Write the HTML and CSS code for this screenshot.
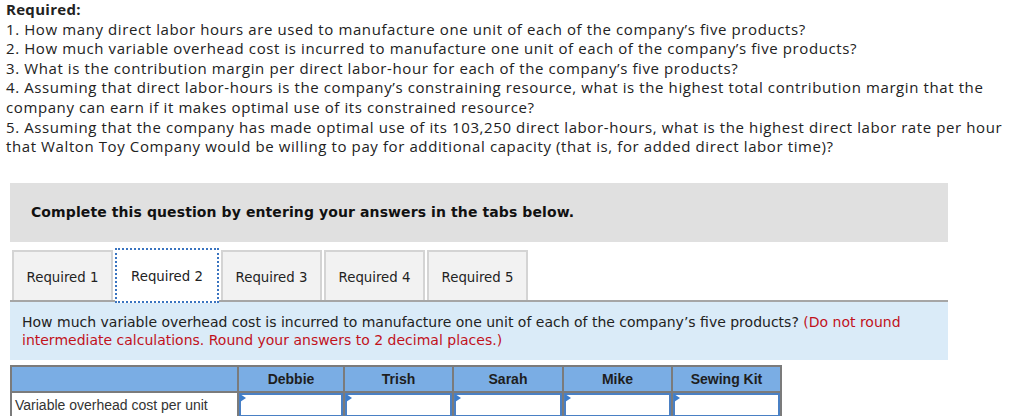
FILE: index.html
```html
<!DOCTYPE html>
<html>
<head>
<meta charset="utf-8">
<link rel="stylesheet" href="styles.css">
</head>
<body>
<div class="req">
  <div class="req-title">Required:</div>
  <div>1. How many direct labor hours are used to manufacture one unit of each of the company’s five products?</div>
  <div>2. How much variable overhead cost is incurred to manufacture one unit of each of the company’s five products?</div>
  <div>3. What is the contribution margin per direct labor-hour for each of the company’s five products?</div>
  <div>4. Assuming that direct labor-hours is the company’s constraining resource, what is the highest total contribution margin that the company can earn if it makes optimal use of its constrained resource?</div>
  <div>5. Assuming that the company has made optimal use of its 103,250 direct labor-hours, what is the highest direct labor rate per hour that Walton Toy Company would be willing to pay for additional capacity (that is, for added direct labor time)?</div>
</div>

<div class="wrap">
  <div class="complete">Complete this question by entering your answers in the tabs below.</div>

  <div class="tabs">
    <div class="tab">Required 1</div>
    <div class="tab active">Required 2</div>
    <div class="tab">Required 3</div>
    <div class="tab">Required 4</div>
    <div class="tab">Required 5</div>
  </div>

  <div class="panel">
    How much variable overhead cost is incurred to manufacture one unit of each of the company’s five products? <span class="red">(Do not round intermediate calculations. Round your answers to 2 decimal places.)</span>
  </div>

  <table class="grid">
    <colgroup>
      <col class="c0"><col class="c1"><col class="c2"><col class="c3"><col class="c4"><col class="c5">
    </colgroup>
    <tr class="head">
      <th></th><th>Debbie</th><th>Trish</th><th>Sarah</th><th>Mike</th><th>Sewing Kit</th>
    </tr>
    <tr class="row">
      <td class="label">Variable overhead cost per unit</td>
      <td class="in"><div class="box"><span class="flag"></span></div></td>
      <td class="in"><div class="box"><span class="flag"></span></div></td>
      <td class="in"><div class="box"><span class="flag"></span></div></td>
      <td class="in"><div class="box"><span class="flag"></span></div></td>
      <td class="in"><div class="box"><span class="flag"></span></div></td>
    </tr>
  </table>
</div>
</body>
</html>
```

FILE: styles.css
```css
html, body {
  margin: 0;
  padding: 0;
  background: #fff;
}
body {
  width: 1024px;
  height: 416px;
  overflow: hidden;
}
.req {
  padding: 0 8px 0 6px;
  font-family: "Open Sans", "Liberation Sans", sans-serif;
  font-size: 15px;
  letter-spacing: 0.6px;
  line-height: 19.6px;
  color: #222;
  width: 1010px;
}
.req-title {
  font-weight: 700;
  letter-spacing: 0.3px;
}
.wrap {
  margin: 26px 0 0 10px;
  width: 938px;
}
.complete {
  background: #e0e0e0;
  height: 59px;
  display: flex;
  align-items: center;
  padding-left: 21px;
  font-family: "DejaVu Sans", Verdana, sans-serif;
  font-weight: 700;
  font-size: 14px;
  letter-spacing: 0.1px;
  color: #111;
}
.tabs {
  display: flex;
  gap: 2px;
  margin-top: 8px;
  padding-left: 2px;
  border-bottom: 2px solid #a6a6a6;
  height: 50px;
}
.tab {
  width: 101px;
  height: 50px;
  box-sizing: border-box;
  padding-top: 3px;
  background: #f2f2f2;
  border: 2px solid #d4d4d4;
  border-bottom: none;
  display: flex;
  align-items: center;
  justify-content: center;
  font-family: "DejaVu Sans", Verdana, sans-serif;
  font-size: 13.3px;
  color: #222;
}
.tab.active {
  background: #fff;
  border: 2px dotted #3a74c0;
  height: 55px;
  margin-top: -2px;
  width: 104px;
  position: relative;
  z-index: 1;
}
.panel {
  background: #daebf8;
  height: 58px;
  box-sizing: border-box;
  padding: 11px 12px 0 12px;
  font-family: "DejaVu Sans", Verdana, sans-serif;
  font-size: 14px;
  line-height: 18px;
  color: #222;
}
.red {
  color: #c1121c;
}
.grid {
  margin-top: 5px;
  border-collapse: collapse;
  font-family: "Liberation Sans", Arial, sans-serif;
  font-size: 14px;
  color: #222;
}
.c0 { width: 227px; }
.c1 { width: 106px; }
.c2 { width: 109px; }
.c3 { width: 110px; }
.c4 { width: 109px; }
.c5 { width: 109px; }
.grid th, .grid td {
  border: 2px solid #7b7b7b;
  padding: 0;
}
.head th {
  background: #7aade4;
  height: 24px;
  font-weight: 700;
  color: #1e1e1e;
  text-align: center;
}
.row td {
  height: 24px;
}
.label {
  padding-left: 3px !important;
  text-align: left;
  color: #333;
  background: #fff;
}
.in {
  background: #fff;
}
.box {
  height: 24px;
  box-sizing: border-box;
  border: 2px solid #4a80c4;
  position: relative;
  background: #fff;
}
.flag {
  position: absolute;
  left: -1px;
  top: -1px;
  width: 0;
  height: 0;
  border-top: 4px solid transparent;
  border-bottom: 4px solid transparent;
  border-left: 6px solid #3c7dcb;
}
```
